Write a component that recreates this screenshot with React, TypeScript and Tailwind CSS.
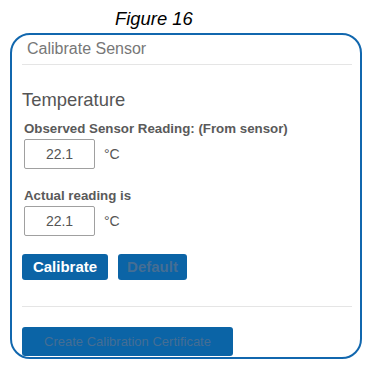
import React from 'react';

const font = { fontFamily: '"Liberation Sans", Arial, sans-serif' };

const ReadingInput = ({ value }: { value: string }) => (
  <div className="flex items-center mt-[2px] pl-[2px]">
    <div className="w-[71px] h-[30px] border border-[#a0a0a0] rounded-[2px] flex items-center justify-center text-[14px] text-[#555]">
      {value}
    </div>
    <span className="ml-[9px] text-[14px] text-[#555]">°C</span>
  </div>
);

export default function App() {
  return (
    <div className="w-[369px] h-[368px] bg-white" style={font}>
      {/* caption */}
      <div className="pt-[10px] pl-[115px] text-[18.4px] leading-[18px] italic text-black">Figure 16</div>

      {/* card */}
      <div className="mt-[5px] ml-[10px] w-[352px] h-[326px] border-2 border-[#1167ae] rounded-[20px] pl-[10px] pr-[8px] flex flex-col">
        <div className="pt-[4px] pl-[5px] text-[16px] leading-[20px] text-[#777]">Calibrate Sensor</div>
        <div className="mt-[5px] border-t border-[#e5e5e5]" />

        <div className="mt-[24px] text-[18.4px] leading-[22px] text-[#555]">Temperature</div>

        <div className="mt-[10px] pl-[2px] text-[13.3px] leading-[16px] font-bold text-[#5a5a5a]">
          Observed Sensor Reading: (From sensor)
        </div>
        <ReadingInput value="22.1" />

        <div className="mt-[19px] pl-[2px] text-[13.3px] leading-[16px] font-bold text-[#5a5a5a]">Actual reading is</div>
        <ReadingInput value="22.1" />

        <div className="mt-[18px] flex gap-[10px]">
          <button className="w-[86px] h-[26px] rounded-[3px] bg-[#0b64a6] text-white text-[15px] font-bold">
            Calibrate
          </button>
          <button className="w-[69px] h-[26px] rounded-[3px] bg-[#0b64a6] text-[#456e94] text-[15px] font-bold">
            Default
          </button>
        </div>

        <div className="mt-[26px] border-t border-[#e5e5e5]" />

        <button className="mt-[20px] w-[211px] h-[29px] rounded-[3px] bg-[#0b64a6] text-[#456e94] text-[13px]">
          Create Calibration Certificate
        </button>
      </div>
    </div>
  );
}
